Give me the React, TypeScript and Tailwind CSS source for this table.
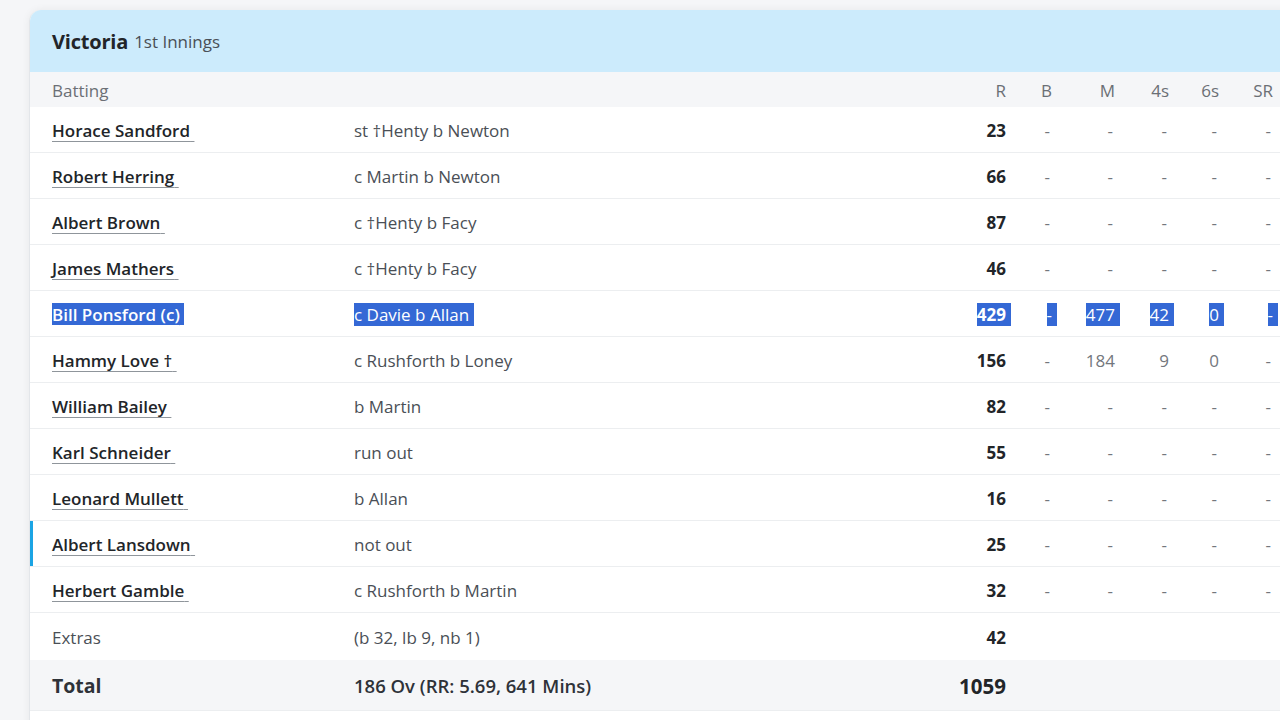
import React from "react";

type Row = {
  name: string;
  dis: string;
  r: string;
  b?: string;
  m?: string;
  f?: string;
  s?: string;
  sr?: string;
  sel?: boolean;
  active?: boolean;
};

const rows: Row[] = [
  { name: "Horace Sandford", dis: "st \u2020Henty b Newton", r: "23" },
  { name: "Robert Herring", dis: "c Martin b Newton", r: "66" },
  { name: "Albert Brown", dis: "c \u2020Henty b Facy", r: "87" },
  { name: "James Mathers", dis: "c \u2020Henty b Facy", r: "46" },
  { name: "Bill Ponsford (c)", dis: "c Davie b Allan", r: "429", m: "477", f: "42", s: "0", sel: true },
  { name: "Hammy Love \u2020", dis: "c Rushforth b Loney", r: "156", m: "184", f: "9", s: "0" },
  { name: "William Bailey", dis: "b Martin", r: "82" },
  { name: "Karl Schneider", dis: "run out", r: "55" },
  { name: "Leonard Mullett", dis: "b Allan", r: "16" },
  { name: "Albert Lansdown", dis: "not out", r: "25", active: true },
  { name: "Herbert Gamble", dis: "c Rushforth b Martin", r: "32" },
];

const SEL = "bg-[#3468d5] text-white";

function Cell({ v, w, sel, bold }: { v: string; w: string; sel?: boolean; bold?: boolean }) {
  const dash = v === "-";
  return (
    <div className={`${w} shrink-0 text-right`}>
      <span
        className={`${sel ? SEL + " pr-[5px] mr-[-5px]" : bold ? "text-[#222529]" : "text-[#73777d]"} ${bold ? "font-bold" : ""} ${dash && !sel ? "mr-[2px]" : ""}`}
      >
        {v}
      </span>
    </div>
  );
}

export default function App() {
  return (
    <div
      className="w-[1280px] h-[720px] overflow-hidden bg-[#f5f6f8] pt-[10px] pl-[29px]"
      style={{ fontFamily: "'Open Sans', 'Noto Sans', sans-serif" }}
    >
      <div className="w-[1300px] bg-white rounded-tl-[12px] border-l border-[#e3e6ea] shadow-[0_0_8px_rgba(0,0,0,0.06)] overflow-hidden">
        <div className="h-[62px] bg-[#ccebfc] flex items-center pl-[22px] pt-[2px]">
          <span className="text-[20px] font-bold text-[#222529] tracking-[-0.2px]">Victoria</span>
          <span className="text-[17px] text-[#4a4f56] ml-[6px]">1st Innings</span>
        </div>
        <div className="h-[35px] bg-[#f5f6f8] flex items-center text-[17px] text-[#6b6f75] pt-[2px]">
          <div className="w-[324px] shrink-0 pl-[22px]">Batting</div>
          <div className="w-[593px] shrink-0"></div>
          <div className="w-[60px] shrink-0 text-right pr-[1px]">R</div>
          <div className="w-[45px] shrink-0 text-right">B</div>
          <div className="w-[63px] shrink-0 text-right">M</div>
          <div className="w-[54px] shrink-0 text-right">4s</div>
          <div className="w-[50px] shrink-0 text-right">6s</div>
          <div className="w-[54px] shrink-0 text-right">SR</div>
        </div>
        {rows.map((r) => (
          <div
            key={r.name}
            className={`h-[46px] flex items-center border-b border-[#eceef0] text-[17px] pt-[2px] ${r.active ? "shadow-[inset_3px_0_0_#1ba4e4]" : ""}`}
          >
            <div className="w-[324px] shrink-0 pl-[22px]">
              <span
                className={`font-semibold underline decoration-[#8f959b] underline-offset-[4px] decoration-[1px] ${r.sel ? SEL + " decoration-white" : "text-[#222529]"}`}
              >
                {r.name}
                {"\u00a0"}
              </span>
            </div>
            <div className="w-[593px] shrink-0">
              <span className={r.sel ? SEL + " pr-[5px]" : "text-[#4a4f56]"}>{r.dis}</span>
            </div>
            <Cell v={r.r} w="w-[59px] mr-[1px]" sel={r.sel} bold />
            <Cell v={r.b ?? "-"} w="w-[45px]" sel={r.sel} />
            <Cell v={r.m ?? "-"} w="w-[63px]" sel={r.sel} />
            <Cell v={r.f ?? "-"} w="w-[54px]" sel={r.sel} />
            <Cell v={r.s ?? "-"} w="w-[50px]" sel={r.sel} />
            <Cell v={r.sr ?? "-"} w="w-[54px]" sel={r.sel} />
          </div>
        ))}
        <div className="h-[47px] flex items-center text-[17px] pt-[3px]">
          <div className="w-[324px] shrink-0 pl-[22px] text-[#4a4f56]">Extras</div>
          <div className="w-[593px] shrink-0 text-[#4a4f56]">(b 32, lb 9, nb 1)</div>
          <div className="w-[59px] mr-[1px] shrink-0 text-right font-bold text-[#222529]">42</div>
        </div>
        <div className="h-[51px] flex items-center bg-[#f5f6f8] border-b border-[#eceef0] pt-[2px]">
          <div className="w-[324px] shrink-0 pl-[22px] text-[19.5px] font-bold text-[#2e3238]">Total</div>
          <div className="w-[593px] shrink-0 text-[18.5px] font-semibold text-[#2e3238]">186 Ov (RR: 5.69, 641 Mins)</div>
          <div className="w-[59px] mr-[1px] shrink-0 text-right text-[20.5px] font-bold text-[#222529]">1059</div>
        </div>
        <div className="h-[20px]"></div>
      </div>
    </div>
  );
}
